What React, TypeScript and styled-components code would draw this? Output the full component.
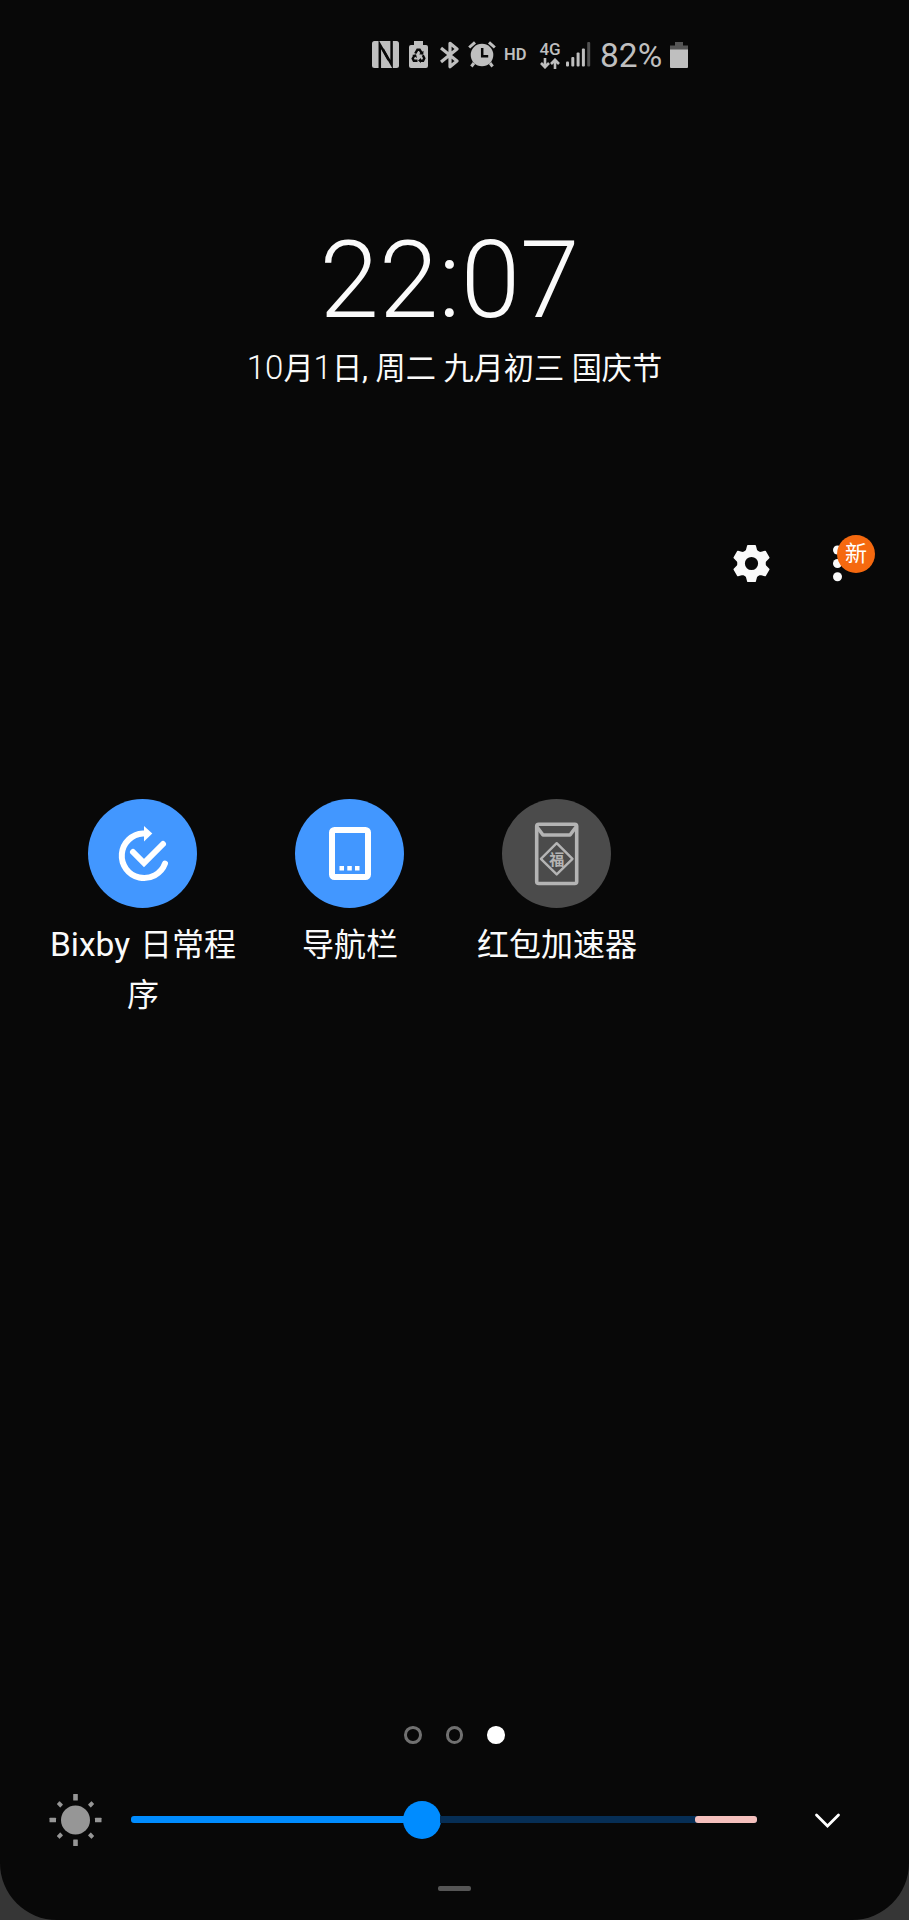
import React from 'react';
import styled, { createGlobalStyle } from 'styled-components';

const GlobalStyle = createGlobalStyle`
  * { box-sizing: border-box; }
  body {
    margin: 0;
    background: #363636;
    color: #fafafa;
    font-family: Roboto, "Noto Sans CJK SC", sans-serif;
  }
  svg { display: block; flex: none; }
`;

const Panel = styled.main`
  display: flex;
  flex-direction: column;
  width: 909px;
  height: 1920px;
  background: #080808;
  border-radius: 0 0 57px 57px;
  overflow: hidden;
`;

const StatusBar = styled.header`
  display: flex;
  align-items: center;
  height: 109px;
  padding-left: 372px;
  color: #bfbfbf;
`;

const StatusItem = styled.div<{ $gap?: number }>`
  display: flex;
  margin-left: ${(p) => p.$gap ?? 0}px;
`;

const HdLabel = styled.span`
  width: 23px;
  margin-left: 8px;
  font-size: 16.5px;
  font-weight: 600;
  line-height: 20px;
`;

const Network = styled.div`
  display: flex;
  flex-direction: column;
  align-items: center;
  width: 20px;
  margin-left: 13px;
  font-size: 17px;
  font-weight: 500;
  line-height: 16px;
  gap: 1px;
`;

const Percent = styled.span`
  width: 63px;
  margin-left: 9px;
  padding-top: 3px;
  font-size: 33.5px;
  line-height: 40px;
  white-space: nowrap;
`;

const Clock = styled.section`
  display: flex;
  flex-direction: column;
  align-items: center;
  height: 391px;
  padding-top: 109px;
`;

const Time = styled.div`
  height: 126px;
  font-size: 107px;
  font-weight: 300;
  line-height: 126px;
  margin-right: 10px;
`;

const DateLine = styled.div`
  margin-top: 2px;
  font-size: 30.2px;
  line-height: 44px;
  white-space: nowrap;
`;

const Digits = styled.span`
  font-size: 33px;
  font-weight: 300;
`;

const Toolbar = styled.nav`
  display: flex;
  align-items: center;
  height: 126px;
  padding-left: 732px;
`;

const More = styled.div`
  position: relative;
  margin-left: 62px;
`;

const Badge = styled.span`
  position: absolute;
  top: -10px;
  left: 4px;
  width: 38px;
  height: 38px;
  border-radius: 50%;
  background: #f5690f;
  color: #fff;
  font-size: 22px;
  line-height: 37px;
  text-align: center;
`;

const Tiles = styled.section`
  display: grid;
  grid-template-columns: repeat(4, 207px);
  align-content: start;
  height: 1100px;
  padding: 173px 0 0 39px;
`;

const Tile = styled.div`
  display: flex;
  flex-direction: column;
  align-items: center;
`;

const TileIcon = styled.div<{ $on: boolean }>`
  display: flex;
  align-items: center;
  justify-content: center;
  width: 109px;
  height: 109px;
  border-radius: 50%;
  background: ${(p) => (p.$on ? '#4297ff' : '#4b4b4b')};
`;

const TileLabel = styled.span`
  width: 201px;
  margin-top: 12px;
  padding-left: 1px;
  font-size: 32px;
  line-height: 50px;
  text-align: center;
`;

const Latin = styled.span`
  font-size: 33.5px;
  line-height: 1;
  margin-right: 2px;
`;

const Pager = styled.div`
  display: flex;
  justify-content: center;
  gap: 24px;
  height: 18px;
`;

const PageDot = styled.i<{ $active?: boolean }>`
  width: 17.5px;
  height: 17.5px;
  border-radius: 50%;
  border: 3px solid ${(p) => (p.$active ? '#fff' : '#707070')};
  background: ${(p) => (p.$active ? '#fff' : 'transparent')};
`;

const Brightness = styled.section`
  display: flex;
  align-items: center;
  height: 54px;
  margin-top: 49px;
  padding-left: 49px;
`;

const Track = styled.div`
  display: flex;
  align-items: center;
  width: 626px;
  height: 38px;
  margin: 0 57px 0 29px;
`;

const Filled = styled.div`
  width: 274px;
  height: 7px;
  margin-bottom: 1px;
  border-radius: 3px 0 0 3px;
  background: #008cff;
`;

const Thumb = styled.div`
  width: 38px;
  height: 38px;
  margin-left: -2px;
  border-radius: 50%;
  background: #008cff;
`;

const Rest = styled.div`
  display: flex;
  justify-content: flex-end;
  flex: 1;
  height: 7px;
  margin: 0 0 1px -1px;
  border-radius: 0 4px 4px 0;
  background: #062e55;
`;

const Warning = styled.div`
  width: 62px;
  height: 7px;
  border-radius: 3px;
  background: #f5c0bd;
`;

const Handle = styled.div`
  width: 33px;
  height: 5px;
  margin: 39px 0 0 438px;
  border-radius: 2px;
  background: #555;
`;

const NfcIcon = () => (
  <svg width="27" height="27" viewBox="0 0 27 27">
    <rect width="27" height="27" rx="2.5" fill="#bfbfbf" />
    <g fill="none" stroke="#080808" strokeWidth="2.5">
      <path d="M7.8 27V3.5l8.8 15.500" />
      <path d="M19.600 0v23.500l-8.800-15.500" />
    </g>
  </svg>
);

const SaverIcon = () => (
  <svg width="19" height="27" viewBox="0 0 19 27">
    <path d="M5 0h9v4h3q2 0 2 2v19q0 2-2 2H2q-2 0-2-2V6q0-2 2-2h3z" fill="#bfbfbf" />
    <g fill="none" stroke="#080808" strokeWidth="2.4">
      <path d="M6.2 12.5l2.2-3.7h2.3l1.9 3" />
      <path d="M13.8 14.2l1.5 3-1.2 2.5h-3.2" />
      <path d="M8.5 19.7H4.8l-1.1-2.2 1.8-3" />
    </g>
    <path d="M10 13.2l4.3.5.2-4zM12 17v5l-3-2.5zM3 14l4-.8 1 3.8z" fill="#080808" />
  </svg>
);

const BluetoothIcon = () => (
  <svg width="19" height="28" viewBox="0 0 19 28" fill="none" stroke="#bfbfbf" strokeWidth="3.2">
    <path d="M1 7l16 13-7 5.7V2.300l7 5.700L1 21" strokeLinejoin="round" />
  </svg>
);

const AlarmIcon = () => (
  <svg width="28" height="27" viewBox="0 0 28 27">
    <circle cx="14" cy="14" r="11.3" fill="#bfbfbf" />
    <path d="M1.2 6.5L7 1.3M21 1.3l5.8 5.2M6 22l-2.6 3.5M22 22l2.6 3.5" stroke="#bfbfbf" strokeWidth="3" />
    <path d="M14.2 7v8.3h6" fill="none" stroke="#080808" strokeWidth="2.5" />
  </svg>
);

const DataArrows = () => (
  <svg width="20" height="11" viewBox="0 0 20 11" fill="none" stroke="#bfbfbf" strokeWidth="2.6">
    <path d="M5 0v9M1 5l4 4.2L9 5M15 11V2M11 6l4-4.2L19 6" />
  </svg>
);

const SignalIcon = () => (
  <svg width="25" height="25" viewBox="0 0 25 25" fill="#bfbfbf">
    <rect x="0" y="19.5" width="3" height="5" rx="1" />
    <rect x="5.3" y="15" width="3" height="9.5" rx="1" />
    <rect x="10.6" y="10.5" width="3" height="14" rx="1" />
    <rect x="15.9" y="6.5" width="3" height="18" rx="1" />
    <rect x="21.2" y="0" width="3" height="24.5" rx="1" fill="#515151" />
  </svg>
);

const BatteryIcon = () => (
  <svg width="18" height="26" viewBox="0 0 18 26">
    <path d="M5 0h8v3.5h5V8H0V3.5h5z" fill="#555" />
    <path d="M0 7.5h18V25q0 1-1 1H1q-1 0-1-1z" fill="#bfbfbf" />
  </svg>
);

const GearIcon = () => (
  <svg width="39" height="39" viewBox="-19.5 -19.5 39 39" fill="#fafafa" stroke="#fafafa">
    <circle r="9.9" fill="none" strokeWidth="6.6" />
    {[0, 60, 120, 180, 240, 300].map((angle) => (
      <path
        key={angle}
        d="M-3.6-17.8H3.6L4.8-13.2 6.8-11.2H-6.8L-4.8-13.2z"
        strokeWidth="1.6"
        strokeLinejoin="round"
        transform={`rotate(${angle})`}
      />
    ))}
  </svg>
);

const MoreIcon = () => (
  <svg width="9" height="37" viewBox="0 0 9 37" fill="#fafafa">
    <circle cx="4.5" cy="5" r="4.5" />
    <circle cx="4.5" cy="18.5" r="4.5" />
    <circle cx="4.5" cy="31.7" r="4.5" />
  </svg>
);

const RoutineIcon = () => (
  <svg width="109" height="109" viewBox="0 0 109 109" fill="none" stroke="#fff" strokeWidth="6">
    <path d="M56 34.500h-1A22.300 22.300 0 1 0 77 64.500" strokeLinecap="round" />
    <path d="M56 27l8.3 7.5-8.3 8z" fill="#fff" stroke="none" />
    <path d="M45 53l11 11 19-19" strokeLinecap="round" />
  </svg>
);

const NavBarIcon = () => (
  <svg width="109" height="109" viewBox="0 0 109 109">
    <rect x="37" y="31" width="36" height="47" rx="2.5" fill="none" stroke="#fff" strokeWidth="6" />
    <path d="M44.5 67h4.5v4.5h-4.5zM52.3 67h4.5v4.5h-4.5zM60 67h4.5v4.5H60z" fill="#fff" />
  </svg>
);

const EnvelopeIcon = () => (
  <svg width="109" height="109" viewBox="0 0 109 109" fill="none" stroke="#b4b4b4" strokeWidth="3.6" strokeLinejoin="round">
    <rect x="34.7" y="25.2" width="40" height="59.3" rx="2" />
    <path d="M35 28l6 8h27l6-8" />
    <path d="M54.7 44.2l15.8 15.6-15.8 15.6-15.8-15.6z" strokeWidth="2.4" />
    <text
      x="54.7"
      y="65.5"
      textAnchor="middle"
      fontFamily="Noto Sans CJK SC, sans-serif"
      fontSize="15"
      fontWeight="700"
      fill="#b4b4b4"
      stroke="none"
    >
      福
    </text>
  </svg>
);

const SunIcon = () => (
  <svg width="53" height="54" viewBox="-26.5 -27 53 54" fill="#969696">
    <circle r="14.5" />
    {[0, 90, 180, 270].map((angle) => (
      <rect key={angle} x="-2.3" y="-26" width="4.6" height="6.5" rx="0.5" transform={`rotate(${angle})`} />
    ))}
    {[45, 135, 225, 315].map((angle) => (
      <rect key={angle} x="-2" y="-24.6" width="4" height="5" rx="0.5" transform={`rotate(${angle})`} />
    ))}
  </svg>
);

const ChevronIcon = () => (
  <svg width="28" height="18" viewBox="0 0 28 18" fill="none" stroke="#fff" strokeWidth="2.8">
    <path d="M2.500 4l11 11 11-11" strokeLinecap="round" />
  </svg>
);

const tiles = [
  { id: 'routine', label: <><Latin>Bixby</Latin> 日常程序</>, on: true, icon: <RoutineIcon /> },
  { id: 'navbar', label: '导航栏', on: true, icon: <NavBarIcon /> },
  { id: 'envelope', label: '红包加速器', on: false, icon: <EnvelopeIcon /> },
];

export default function App() {
  return (
    <>
      <GlobalStyle />
      <Panel>
        <StatusBar>
          <StatusItem><NfcIcon /></StatusItem>
          <StatusItem $gap={10}><SaverIcon /></StatusItem>
          <StatusItem $gap={12}><BluetoothIcon /></StatusItem>
          <StatusItem $gap={9}><AlarmIcon /></StatusItem>
          <HdLabel>HD</HdLabel>
          <Network>
            4G
            <DataArrows />
          </Network>
          <StatusItem $gap={6}><SignalIcon /></StatusItem>
          <Percent>82%</Percent>
          <StatusItem $gap={7}><BatteryIcon /></StatusItem>
        </StatusBar>
        <Clock>
          <Time>22:07</Time>
          <DateLine>
            <Digits>10</Digits>月<Digits>1</Digits>日, 周二 九月初三 国庆节
          </DateLine>
        </Clock>
        <Toolbar>
          <GearIcon />
          <More>
            <MoreIcon />
            <Badge>新</Badge>
          </More>
        </Toolbar>
        <Tiles>
          {tiles.map((tile) => (
            <Tile key={tile.id}>
              <TileIcon $on={tile.on}>{tile.icon}</TileIcon>
              <TileLabel>{tile.label}</TileLabel>
            </Tile>
          ))}
        </Tiles>
        <Pager>
          <PageDot />
          <PageDot />
          <PageDot $active />
        </Pager>
        <Brightness>
          <SunIcon />
          <Track>
            <Filled />
            <Thumb />
            <Rest>
              <Warning />
            </Rest>
          </Track>
          <ChevronIcon />
        </Brightness>
        <Handle />
      </Panel>
    </>
  );
}
